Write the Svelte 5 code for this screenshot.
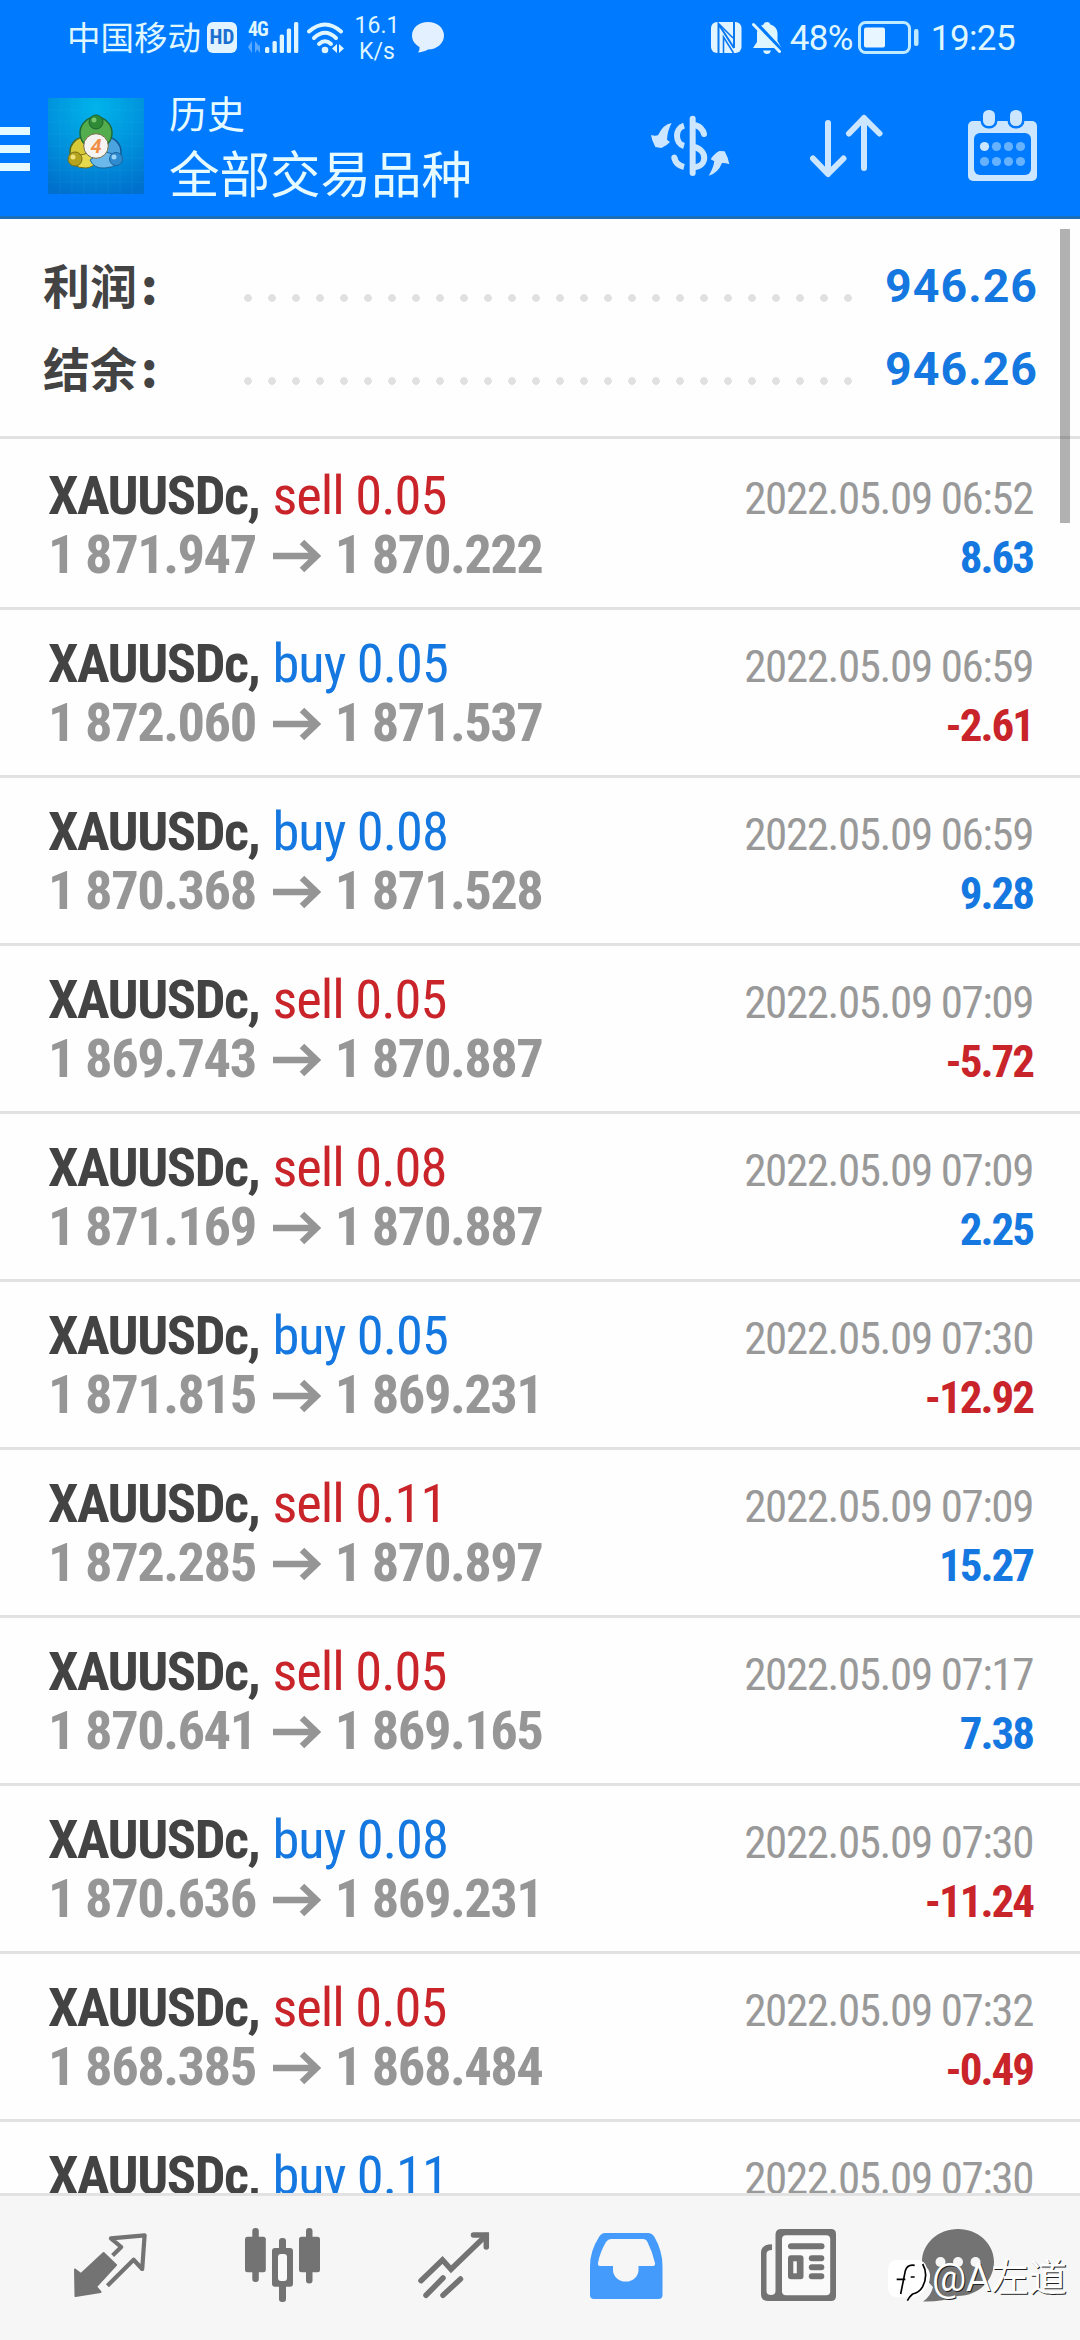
<script>
    const summary = [
        { label: "利润", value: "946.26" },
        { label: "结余", value: "946.26" },
    ];

    const deals = [
        { side: "sell", volume: "0.05", open: "1 871.947", close: "1 870.222", time: "2022.05.09 06:52", profit: "8.63" },
        { side: "buy", volume: "0.05", open: "1 872.060", close: "1 871.537", time: "2022.05.09 06:59", profit: "-2.61" },
        { side: "buy", volume: "0.08", open: "1 870.368", close: "1 871.528", time: "2022.05.09 06:59", profit: "9.28" },
        { side: "sell", volume: "0.05", open: "1 869.743", close: "1 870.887", time: "2022.05.09 07:09", profit: "-5.72" },
        { side: "sell", volume: "0.08", open: "1 871.169", close: "1 870.887", time: "2022.05.09 07:09", profit: "2.25" },
        { side: "buy", volume: "0.05", open: "1 871.815", close: "1 869.231", time: "2022.05.09 07:30", profit: "-12.92" },
        { side: "sell", volume: "0.11", open: "1 872.285", close: "1 870.897", time: "2022.05.09 07:09", profit: "15.27" },
        { side: "sell", volume: "0.05", open: "1 870.641", close: "1 869.165", time: "2022.05.09 07:17", profit: "7.38" },
        { side: "buy", volume: "0.08", open: "1 870.636", close: "1 869.231", time: "2022.05.09 07:30", profit: "-11.24" },
        { side: "sell", volume: "0.05", open: "1 868.385", close: "1 868.484", time: "2022.05.09 07:32", profit: "-0.49" },
        { side: "buy", volume: "0.11", open: "", close: "", time: "2022.05.09 07:30", profit: "" },
    ];
</script>

<div class="screen">
    <div class="status">
        <span class="carrier">中国移动</span>
        <span class="hd">HD</span>
        <div class="network">
            <span>4G</span>
            <svg width="16" height="12" viewBox="0 0 16 12"><path d="M0 6 4 0V12M7 12V0l4 5M9 8l3-4v8" fill="#5aa9ff"/></svg>
        </div>
        <svg class="signal" width="34" height="31" viewBox="0 0 34 31" fill="#dff6ff">
            <rect x="0" y="25" width="4.3" height="6" rx="1.5"/>
            <rect x="7.5" y="19" width="4.3" height="12" rx="1.5"/>
            <rect x="14.7" y="12.5" width="4.3" height="18.5" rx="1.5"/>
            <rect x="21.8" y="6.5" width="4.3" height="24.5" rx="1.5"/>
            <rect x="29" y="0" width="4.3" height="31" rx="1.5"/>
        </svg>
        <svg class="wifi" width="38" height="32" viewBox="0 0 38 32" fill="none" stroke="#dff6ff" stroke-width="4" stroke-linecap="round">
            <path d="M2 9.500Q18 -4.500 34 9.500"/>
            <path d="M7 16Q18 5.500 29 16"/>
            <path d="M12 22Q18 16.500 24 22"/>
            <circle cx="18" cy="28" r="3.300" fill="#dff6ff" stroke="none"/>
            <path d="M25 26.500l5-4.500v9zM32 31v-9l5 4.500z" fill="#dff6ff" stroke="none"/>
        </svg>
        <div class="speed"><span>16.1</span><span>K/s</span></div>
        <svg class="bubble" width="32" height="31" viewBox="0 0 32 31"><path d="M16 0C25 0 32 5.800 32 13.500S25 27.500 16 27.500Q13 29.500 6 30.500Q8 28 7.500 25C3 22.500 0 18.500 0 13.500 0 5.800 7 0 16 0z" fill="#e2f0ff"/></svg>

        <svg class="nfc" width="31" height="31" viewBox="0 0 31 31">
            <rect width="30.500" height="31" rx="6" fill="#e2f4ff"/>
            <path d="M7.500 31V2L23 26" fill="none" stroke="#0a78f0" stroke-width="2"/>
            <path d="M23 0v26" fill="none" stroke="#0a78f0" stroke-width="2"/>
            <path d="M12.500 31V15l10 16M8 2l14 14" fill="none" stroke="#0a78f0" stroke-width="1.600"/>
        </svg>
        <svg class="bell" width="30" height="32" viewBox="0 0 30 32">
            <path d="M15 0c2 0 3 1 3.400 2.500C23.500 4 25.500 7.500 25.500 12v7l4 7H1l4-6v-8c0-5 2-8 6.600-9.500C12 1 13 0 15 0zM11 28.500h8q-1 3.500-4 3.500t-4-3.500z" fill="#dff6ff"/>
            <path d="M3 0l28 30" stroke="#007aff" stroke-width="4"/>
            <path d="M1.500 2.500l26 27" stroke="#dff6ff" stroke-width="3" stroke-linecap="round"/>
        </svg>
        <span class="percent">48%</span>
        <svg class="battery" width="62" height="33" viewBox="0 0 62 33">
            <rect x="1.500" y="1.500" width="50" height="30" rx="6" fill="none" stroke="#bfeaff" stroke-width="3"/>
            <rect x="6" y="6.500" width="21" height="20" rx="2" fill="#e8f6ff"/>
            <rect x="56" y="8" width="4.500" height="17" rx="2" fill="#bfeaff"/>
        </svg>
        <span class="clock">19:25</span>
    </div>

    <header>
        <div class="burger"><i></i><i></i><i></i></div>
        <svg class="logo" width="96" height="96" viewBox="0 0 96 96">
            <defs>
                <radialGradient id="sky" cx="0.5" cy="0.1" r="0.95">
                    <stop offset="0" stop-color="#00b4ea"/>
                    <stop offset="0.55" stop-color="#0091dc"/>
                    <stop offset="1" stop-color="#0070cc"/>
                </radialGradient>
            </defs>
            <rect width="96" height="96" fill="url(#sky)"/>
            <path d="M12 0v96M24 0v96M36 0v96M48 0v96M60 0v96M72 0v96M84 0v96M0 12h96M0 24h96M0 36h96M0 48h96M0 60h96M0 72h96M0 84h96" stroke="#35b4ee" stroke-opacity="0.12"/>
            <circle cx="37" cy="54" r="15" fill="#d7c938" stroke="#4c6a22" stroke-width="1.500"/>
            <circle cx="58" cy="54" r="15" fill="#4ba3e0" stroke="#125a94" stroke-width="1.500"/>
            <circle cx="48" cy="35" r="16" fill="#54ad4c" stroke="#1e6b3a" stroke-width="1.500"/>
            <path d="M22 60Q24 70 38 70Q46 69 49 63L40 55z" fill="#e6d94d" stroke="#776f1d"/>
            <path d="M42 62Q46 71 57 70Q71 69 74 59L55 53z" fill="#6bb9ea" stroke="#1d659d"/>
            <circle cx="48" cy="24" r="7" fill="#2e8a35" stroke="#1b6334"/>
            <circle cx="46" cy="22" r="2.500" fill="#76c46d"/>
            <circle cx="27" cy="61" r="7" fill="#b5a31e" stroke="#776f1d"/>
            <circle cx="25" cy="59" r="2.500" fill="#eee07b"/>
            <circle cx="68" cy="61" r="6.500" fill="#2f8bd0" stroke="#1d659d"/>
            <circle cx="66" cy="59" r="2.500" fill="#9ad5f7"/>
            <circle cx="48" cy="48" r="12.300" fill="#f6f4f2" stroke="#746d46"/>
            <text x="48" y="55" text-anchor="middle" font-family="Roboto" font-weight="700" font-style="italic" font-size="20" fill="#f09048">4</text>
        </svg>
        <div class="titles">
            <span class="section">历史</span>
            <span class="symbol-filter">全部交易品种</span>
        </div>
        <div class="actions">
            <svg width="110" height="90" viewBox="0 0 330 270" fill="none" stroke="#cce6ff" stroke-width="18">
                <path d="M158 53V216" stroke-linecap="round"/>
                <path d="M132 74C104 82 104 127 132 135" />
                <path d="M168 73Q187 79 192 99" stroke-linecap="round"/>
                <path d="M103 171Q108 192 132 198" />
                <path d="M103 170l1 3" stroke-linecap="round"/>
                <path d="M162 138C204 148 202 196 162 199"/>
                <path d="M95 66Q82 90 81 116L90 123 80 132 64 141 46 138 37 118 33 102Q44 106 54 103Q69 70 95 66z" fill="#cce6ff" stroke="none"/>
                <path d="M206 224Q220 202 223 181L212 175Q222 158 238 150L254 151 263 170 268 190Q256 185 246 186Q234 217 206 224z" fill="#cce6ff" stroke="none"/>
            </svg>
            <svg class="sort" width="73" height="64" viewBox="0 0 73 64" fill="none" stroke="#cce6ff" stroke-width="6" stroke-linecap="round" stroke-linejoin="round">
                <path d="M18 9V59M3 44.500L18 60 33.500 44.500"/>
                <path d="M54 54V4M39 19.500L54 4 69.500 19.500"/>
            </svg>
            <svg width="69" height="72" viewBox="0 0 69 72">
                <rect y="11" width="69" height="60" rx="5" fill="#cce6ff"/>
                <rect x="6" y="23" width="57" height="42" rx="6" fill="#007aff"/>
                {#each [15, 42] as x}
                    <rect {x} y="0" width="12" height="16" rx="5.500" fill="#cce6ff" stroke="#007aff" stroke-width="5" paint-order="stroke"/>
                {/each}
                {#each [16.500, 28.500, 40.500, 52.500] as cx, i}
                    <circle {cx} cy="36.500" r="4.600" fill={i ? "#66b2ff" : "#cce6ff"}/>
                    <circle {cx} cy="51.500" r="4.600" fill="#66b2ff"/>
                {/each}
            </svg>
        </div>
    </header>

    <main>
        <section class="summary">
            {#each summary as item}
                <div class="total">
                    <span class="label">{item.label}<b>:</b></span>
                    <span class="dots"></span>
                    <span class="value">{item.value}</span>
                </div>
            {/each}
        </section>

        {#each deals as deal}
            <article>
                <div class="line">
                    <span class="symbol">XAUUSDc,</span>
                    <span class="side {deal.side}">{deal.side} {deal.volume}</span>
                    <span class="time">{deal.time}</span>
                </div>
                {#if deal.open}
                    <div class="line">
                        <span class="price">{deal.open}</span>
                        <svg class="arrow" width="48" height="34" viewBox="0 0 48 34" fill="none" stroke="#959595" stroke-width="6.500">
                            <path d="M0 17H43M29 3L43.500 17 29 31"/>
                        </svg>
                        <span class="price">{deal.close}</span>
                        <span class="profit" class:loss={deal.profit.startsWith("-")}>{deal.profit}</span>
                    </div>
                {/if}
            </article>
        {/each}
        <div class="scrollbar"></div>
    </main>

    <nav>
        <a href="#quotes" aria-label="quotes">
            <svg width="73" height="65" viewBox="0 0 73 65" stroke="#737373" stroke-linejoin="round">
                <path d="M29.600 20L42 32 22 53.700 26.500 59 1.500 63 1 36.500 7 41z" fill="#737373" stroke-width="2"/>
                <path d="M38.600 22.500L47.200 14 36.900 5.300 70.600 2.300 68.200 36 59.600 26.700 33.400 52.700" fill="none" stroke-width="4.200"/>
            </svg>
        </a>
        <a href="#charts" aria-label="charts">
            <svg width="75" height="75" viewBox="0 0 75 75" fill="#737373">
                <rect x="7.300" width="6.500" height="54" rx="3"/>
                <rect y="8.700" width="20.800" height="35.500" rx="2.500"/>
                <rect x="34" y="10" width="7" height="64" rx="3"/>
                <rect x="27" y="20" width="21" height="38.700" rx="3"/>
                <rect x="33" y="26" width="9" height="27" rx="3" fill="#fafafa"/>
                <rect x="61" width="6.500" height="55.500" rx="3"/>
                <rect x="54" y="8.700" width="21" height="35.500" rx="2.500"/>
            </svg>
        </a>
        <a href="#trade" aria-label="trade">
            <svg width="72" height="67" viewBox="0 0 72 67" fill="none" stroke="#737373" stroke-width="5.500" stroke-linecap="round">
                <path d="M3 48.700L24.500 28 33 37.300 68 3.500" stroke-linejoin="miter"/>
                <path d="M55.500 3H68.300V15"/>
                <path d="M8 63.300L25 46M25 63.300L42.500 47"/>
            </svg>
        </a>
        <a href="#history" aria-label="history">
            <svg width="73" height="66" viewBox="0 0 73 66">
                <path d="M15 0H58Q62 0 64.500 4Q72.500 18 72.500 33V62Q72.500 66 68.500 66H4Q0 66 0 62V33Q0 18 9 4Q11.500 0 15 0z" fill="#449bfc"/>
                <path d="M21 6H53Q56 6 57.500 9Q62.500 19 65 30Q65.500 33 63 33H48.500V37A12.700 11.500 0 0 1 23 37V33H10Q7.500 33 8 30Q10 19 16 9Q18 6 21 6z" fill="#f6f6f6"/>
            </svg>
        </a>
        <a href="#news" aria-label="news">
            <svg width="75" height="73" viewBox="0 0 75 73" fill="#737373">
                <path d="M11 15.300V21Q5.500 21 5.500 25V62Q5.500 66 10 66T14.500 62V5Q15 0 20 0H70Q75 0 75 5V67Q75 72 70 72H7Q0 72 0 65V24Q0 15.300 11 15.300z"/>
                <rect x="21" y="6.300" width="48.200" height="60" rx="4" fill="#fafafa"/>
                <rect x="27" y="14.300" width="36.500" height="6" rx="3"/>
                <rect x="27" y="26.300" width="15.500" height="24" rx="3"/>
                <rect x="32.300" y="32.300" width="3.500" height="12" fill="#fafafa"/>
                <rect x="47.800" y="26.300" width="15.500" height="6" rx="3"/>
                <rect x="47.800" y="35.300" width="15.500" height="6" rx="3"/>
                <rect x="47.800" y="44.300" width="15.500" height="6" rx="3"/>
            </svg>
        </a>
        <a href="#messages" aria-label="messages">
            <svg width="96" height="73" viewBox="0 0 96 73">
                <path d="M36 0C56 0 72 14.500 72 33S56 67 36 67Q20 73 1 72.500Q9 67 11 58Q0 48 0 33C0 14.500 16 0 36 0z" fill="#737373"/>
                <g fill="#f6f6f6">
                    <circle cx="18.500" cy="33" r="5"/>
                    <circle cx="36" cy="33" r="5"/>
                    <circle cx="53.500" cy="33" r="5"/>
                </g>
            </svg>
        </a>
    </nav>

    <div class="watermark">
        <svg width="44" height="46" viewBox="0 0 132 138">
            <path d="M24 6H88Q112 8 116 28Q134 48 120 82Q110 104 82 118L60 118H24Q0 114 0 86V34Q2 8 24 6z" fill="#fff"/>
            <path d="M80 22Q58 18 52 38L38 108M26 64H52M68 57H80" fill="none" stroke="#000" stroke-width="5"/>
            <path d="M104 18Q122 50 104 86Q94 104 74 108Q64 116 58 128" fill="none" stroke="#000" stroke-width="5"/>
        </svg>
        <span>@A左道</span>
    </div>
</div>

<style>
    :global(body) {
        margin: 0;
    }

    .screen {
        position: relative;
        display: flex;
        flex-direction: column;
        width: 1080px;
        height: 2340px;
        overflow: hidden;
        background-color: #fefefe;
        font-family: "Roboto", "Noto Sans CJK SC", sans-serif;
    }

    svg {
        display: block;
        flex: none;
    }

    .status {
        display: flex;
        align-items: center;
        box-sizing: border-box;
        flex: none;
        height: 75px;
        padding: 0 65px 0 67px;
        background-color: #007aff;
        color: #dff6ff;
    }

    .carrier {
        font-size: 33.5px;
        line-height: 40px;
        margin-top: 2px;
    }

    .hd {
        width: 30px;
        height: 31px;
        margin-left: 6px;
        border-radius: 6px;
        background-color: #e2f4ff;
        color: #1a6fd0;
        font-family: "Roboto Condensed", "Roboto", sans-serif;
        font-size: 21px;
        font-weight: 700;
        line-height: 31px;
        text-align: center;
    }

    .network {
        display: flex;
        flex-direction: column;
        gap: 4px;
        width: 17px;
        margin-left: 11px;
        font-family: "Roboto Condensed", "Roboto", sans-serif;
        font-size: 20px;
        font-weight: 700;
        letter-spacing: -1px;
        line-height: 15px;
    }

    .wifi {
        margin-left: 8px;
    }

    .speed {
        display: flex;
        flex-direction: column;
        align-items: center;
        width: 42px;
        margin: 2px 0 0 11px;
        font-size: 23px;
        line-height: 26px;
    }

    .bubble {
        margin-left: 14px;
    }

    .nfc {
        margin-left: auto;
    }

    .bell {
        margin-left: 10px;
    }

    .percent {
        margin: 2px 0 0 8px;
        font-size: 35px;
        letter-spacing: -0.6px;
    }

    .battery {
        margin-left: 5px;
    }

    .clock {
        margin: 2px 0 0 11px;
        font-size: 35px;
        letter-spacing: -0.6px;
    }

    header {
        display: flex;
        align-items: center;
        box-sizing: border-box;
        flex: none;
        height: 144px;
        padding-right: 43px;
        border-bottom: 3px solid #1a6fb8;
        background-color: #007aff;
        color: #e6fbff;
    }

    .burger {
        display: flex;
        flex-direction: column;
        gap: 10px;
        width: 30px;
        margin-top: 6px;
    }

    .burger i {
        height: 8px;
        background-color: #e6fbff;
    }

    .logo {
        margin-left: 18px;
    }

    .titles {
        display: flex;
        flex-direction: column;
        margin: 8px 0 0 25px;
    }

    .section {
        font-size: 38px;
        line-height: 52px;
    }

    .symbol-filter {
        font-size: 50.5px;
        line-height: 69px;
    }

    .actions {
        display: flex;
        align-items: center;
        margin-left: auto;
    }

    .sort {
        margin: 0 85px 0 60px;
    }

    main {
        position: relative;
        flex: 1;
        min-height: 0;
        overflow: hidden;
    }

    .summary {
        box-sizing: border-box;
        height: 220px;
        padding: 25px 42px 0 43px;
        border-bottom: 3px solid #e2e2e2;
        margin-bottom: 3px;
    }

    .total {
        display: flex;
        align-items: center;
        height: 83px;
    }

    .label {
        width: 199px;
        margin-top: -3px;
        color: #434343;
        font-family: "Noto Sans CJK SC", sans-serif;
        font-size: 47px;
        font-weight: 700;
        line-height: 60px;
    }

    .label b {
        margin-left: 4px;
    }

    .dots {
        width: 612px;
        height: 8px;
        margin-top: 25px;
        background: radial-gradient(circle at 6px 4px, #e0e0e0 3.5px, transparent 4.2px) 0 0 / 24px 8px;
    }

    .value {
        margin-left: auto;
        color: #1478e0;
        font-size: 46.5px;
        font-weight: 700;
        letter-spacing: 1px;
        line-height: 60px;
    }

    article {
        box-sizing: border-box;
        height: 168px;
        padding: 24px 47px 0 48px;
        border-bottom: 3px solid #e2e2e2;
        font-family: "Roboto Condensed", "Roboto", sans-serif;
    }

    .line {
        display: flex;
        align-items: baseline;
        height: 59px;
        font-size: 54.5px;
        line-height: 59px;
        white-space: pre;
    }

    .symbol {
        color: #434343;
        font-weight: 700;
        letter-spacing: -1.5px;
    }

    .side {
        margin-left: 13px;
        letter-spacing: -1px;
    }

    .buy {
        color: #1478e0;
    }

    .sell {
        color: #c8242a;
    }

    .time {
        margin-left: auto;
        color: #999;
        font-size: 45px;
        letter-spacing: -1.4px;
    }

    .price {
        color: #969696;
        font-weight: 700;
        letter-spacing: -1.5px;
    }

    .arrow {
        margin: 0 14px 0 17px;
    }

    .profit {
        margin-left: auto;
        color: #1478e0;
        font-size: 45px;
        font-weight: 700;
        letter-spacing: -2px;
    }

    .loss {
        color: #c8242a;
    }

    .scrollbar {
        position: absolute;
        top: 10px;
        right: 10px;
        width: 10px;
        height: 294px;
        background-color: rgba(0, 0, 0, 0.3);
    }

    nav {
        display: flex;
        box-sizing: border-box;
        flex: none;
        height: 147px;
        padding: 0 24px 5px;
        border-top: 3px solid #e2e2e2;
        background-color: #f6f6f6;
    }

    nav a {
        display: flex;
        align-items: center;
        justify-content: center;
        flex: 1;
    }

    .watermark {
        position: absolute;
        left: 888px;
        top: 2258px;
        display: flex;
        align-items: center;
        color: #fff;
        font-family: "Roboto", "Noto Sans CJK SC", sans-serif;
        font-size: 38px;
        line-height: 40px;
        text-shadow: 1px 1px 0 #222;
    }

    .watermark span {
        margin-top: -7px;
    }
</style>
